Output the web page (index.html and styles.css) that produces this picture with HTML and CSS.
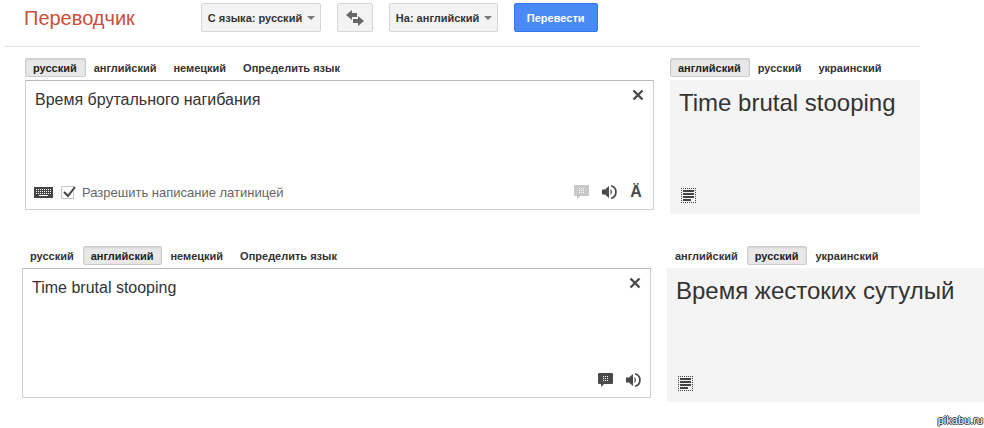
FILE: index.html
```html
<!DOCTYPE html>
<html lang="ru">
<head>
  <meta charset="UTF-8">
  <meta name="viewport" content="width=device-width, initial-scale=1.0">
  <title>Переводчик</title>
  <link rel="stylesheet" href="styles.css">
</head>
<body>
  <!-- Icons shared by both translations -->
  <svg class="sprite" aria-hidden="true">
    <symbol id="icon-close" viewBox="0 0 12 12">
      <path d="M1.500 1.500l9 9M10.500 1.500l-9 9" fill="none" stroke="#4a4a4a" stroke-width="2.4"/>
    </symbol>
    <symbol id="icon-comment" viewBox="0 0 16 16">
      <path d="M1 1h13q1 0 1 1v9q0 1-1 1H6l-3 3v-3H1q-1 0-1-1V2q0-1 1-1z" fill="currentColor"/>
      <path d="M5 4.500h5M5 6.500h5M5 8.500h5" stroke="#fff" stroke-dasharray="1 1" fill="none"/>
    </symbol>
    <symbol id="icon-sound" viewBox="0 0 16 16">
      <path d="M1 5.500h3L8 2v12l-4-3.500H1z" fill="#4a4a4a"/>
      <path d="M9.500 5q3 3 0 6z" fill="#4a4a4a"/>
      <path d="M10 1.700a6.500 6.500 0 0 1 0 12.600" fill="none" stroke="#4a4a4a" stroke-width="1.700"/>
    </symbol>
    <symbol id="icon-text" viewBox="0 0 15 15">
      <path d="M0 .5h15M0 14.500h15M.5 0v15M14.500 0v15" stroke="#444" stroke-dasharray="1 1" fill="none"/>
      <path d="M2 2h11v2H2zM2 5h11v2H2zM2 8h11v2H2zM2 11h8v2H2z" fill="#444"/>
    </symbol>
  </svg>

  <header>
    <h1>Переводчик</h1>
    <div class="controls">
      <div class="picker">
        <select aria-label="Язык оригинала">
          <option>С языка: русский</option>
        </select>
      </div>
      <button class="btn swap" type="button" aria-label="Поменять языки">
        <svg width="18" height="16" viewBox="0 0 18 16">
          <path d="M0 5l6-5v3h5v4H6v3zM18 11l-6 5v-3H7V9h5V6z" fill="#666"/>
        </svg>
      </button>
      <div class="picker">
        <select aria-label="Язык перевода">
          <option>На: английский</option>
        </select>
      </div>
      <button class="btn submit" type="button">Перевести</button>
    </div>
  </header>

  <main>
    <section class="translation first">
      <div class="source">
        <div class="tabs">
          <button class="active" type="button">русский</button>
          <button type="button">английский</button>
          <button type="button">немецкий</button>
          <button type="button">Определить язык</button>
        </div>
        <div class="box">
          <textarea aria-label="Исходный текст" spellcheck="false">Время брутального нагибания</textarea>
          <button class="icon clear" type="button" aria-label="Очистить"><svg width="12" height="12"><use href="#icon-close"/></svg></button>
          <div class="tools">
            <button class="icon keyboard" type="button" aria-label="Клавиатура">
              <svg width="19" height="11" viewBox="0 0 19 11">
                <rect width="19" height="11" fill="#444"/>
                <path d="M2 2.500h15M2 4.500h15M2 6.500h15" stroke="#fff" stroke-dasharray="1 1"/>
                <path d="M5 8.500h9" stroke="#fff"/>
              </svg>
            </button>
            <label class="latin">
              <span class="check">
                <input type="checkbox" checked>
                <svg width="15" height="14" viewBox="0 0 15 14"><path d="M3 6l4 4 7-9" fill="none" stroke="#444" stroke-width="2"/></svg>
              </span>
              Разрешить написание латиницей
            </label>
            <div class="actions">
              <button class="icon muted" type="button" aria-label="Фразы"><svg width="16" height="16"><use href="#icon-comment"/></svg></button>
              <button class="icon" type="button" aria-label="Прослушать"><svg width="16" height="16"><use href="#icon-sound"/></svg></button>
              <button class="icon letter" type="button" aria-label="Транслитерация">Ä</button>
            </div>
          </div>
        </div>
      </div>
      <div class="target">
        <div class="tabs">
          <button class="active" type="button">английский</button>
          <button type="button">русский</button>
          <button type="button">украинский</button>
        </div>
        <div class="result">
          <p>Time brutal stooping</p>
          <button class="icon" type="button" aria-label="Выделить текст"><svg width="15" height="15"><use href="#icon-text"/></svg></button>
        </div>
      </div>
    </section>

    <section class="translation second">
      <div class="source">
        <div class="tabs">
          <button type="button">русский</button>
          <button class="active" type="button">английский</button>
          <button type="button">немецкий</button>
          <button type="button">Определить язык</button>
        </div>
        <div class="box">
          <textarea aria-label="Исходный текст" spellcheck="false">Time brutal stooping</textarea>
          <button class="icon clear" type="button" aria-label="Очистить"><svg width="12" height="12"><use href="#icon-close"/></svg></button>
          <div class="tools">
            <div class="actions">
              <button class="icon" type="button" aria-label="Фразы"><svg width="16" height="16"><use href="#icon-comment"/></svg></button>
              <button class="icon" type="button" aria-label="Прослушать"><svg width="16" height="16"><use href="#icon-sound"/></svg></button>
            </div>
          </div>
        </div>
      </div>
      <div class="target">
        <div class="tabs">
          <button type="button">английский</button>
          <button class="active" type="button">русский</button>
          <button type="button">украинский</button>
        </div>
        <div class="result">
          <p>Время жестоких сутулый</p>
          <button class="icon" type="button" aria-label="Выделить текст"><svg width="15" height="15"><use href="#icon-text"/></svg></button>
        </div>
      </div>
    </section>
  </main>

  <footer>pikabu.ru</footer>
</body>
</html>
```

FILE: styles.css
```css
* {
  margin: 0;
  padding: 0;
  box-sizing: border-box;
}

body {
  background-color: #fff;
  color: #333;
  font-family: "Liberation Sans", Arial, sans-serif;
}

button,
select,
textarea {
  font-family: inherit;
  color: inherit;
}

svg {
  display: block;
}

.sprite {
  display: none;
}

/* Header */
header {
  display: flex;
  align-items: flex-start;
  gap: 66px;
  height: 47px;
  margin-left: 4px;
  margin-right: 64px;
  padding: 3px 0 0 20px;
  border-bottom: 1px solid #e5e5e5;
}

h1 {
  color: #c8503c;
  font-size: 20px;
  font-weight: normal;
  line-height: 30px;
}

.controls {
  display: flex;
  gap: 16px;
}

.btn,
.picker select {
  height: 29px;
  border: 1px solid #d6d6d6;
  border-radius: 2px;
  background-color: #f3f3f3;
  font-size: 11px;
  font-weight: bold;
}

.picker {
  position: relative;
}

.picker select {
  display: block;
  appearance: none;
  padding: 0 17px 0 6px;
}

.picker::after {
  content: "";
  position: absolute;
  top: 13px;
  right: 6px;
  border: 4px solid transparent;
  border-top-color: #777;
  border-bottom: 0;
  pointer-events: none;
}

.swap {
  padding: 0 8px;
}

.btn.submit {
  padding: 0 12px;
  border-color: #3079ed;
  background-color: #4a8af4;
  color: #fff;
}

/* Translations */
.translation {
  display: grid;
  column-gap: 16px;
}

.first {
  grid-template-columns: 1fr 250px;
  padding: 11px 64px 0 25px;
}

.second {
  grid-template-columns: 1fr 317px;
  padding: 32px 0 0 22px;
}

.tabs {
  display: flex;
  height: 22px;
  padding-bottom: 3px;
}

.tabs button {
  padding: 0 8px 0 7px;
  border: 1px solid transparent;
  border-radius: 2px;
  background: none;
  font-size: 11px;
  font-weight: bold;
  white-space: nowrap;
}

.tabs .active {
  border-color: #ccc;
  background-color: #e8e8e8;
  box-shadow: inset 0 1px 2px rgba(0, 0, 0, 0.1);
  color: #222;
}

.box {
  position: relative;
  display: flex;
  flex-direction: column;
  height: 130px;
  border: 1px solid #d0d0d0;
  border-top-color: #b8b8b8;
}

textarea {
  flex: 1;
  width: 100%;
  padding: 9px 32px 0 9px;
  border: 0;
  outline: 0;
  resize: none;
  background: none;
  font-size: 16px;
  line-height: 20px;
}

.icon {
  border: 0;
  background: none;
  color: #4a4a4a;
}

.clear {
  position: absolute;
  top: 8px;
  right: 9px;
}

.tools {
  display: flex;
  align-items: center;
  height: 34px;
  padding: 0 9px 0 8px;
}

.latin {
  display: flex;
  align-items: center;
  gap: 8px;
  margin-left: 8px;
  color: #666;
  font-size: 13px;
}

.check {
  position: relative;
}

.check input {
  display: block;
  appearance: none;
  width: 13px;
  height: 13px;
  border: 1px solid #c6c6c6;
}

.check svg {
  position: absolute;
  top: 0;
  left: 0;
}

.actions {
  display: flex;
  align-items: center;
  gap: 11px;
  margin-left: auto;
}

.muted {
  color: #c8c8c8;
}

.letter {
  width: 16px;
  font-size: 16px;
  font-weight: bold;
}

.result {
  display: flex;
  flex-direction: column;
  align-items: flex-start;
  justify-content: space-between;
  height: 134px;
  padding: 8px 9px 11px;
  background-color: #f4f4f4;
}

.result p {
  font-size: 24px;
  line-height: 30px;
  white-space: nowrap;
}

.result .icon {
  margin-left: 2px;
}

/* Site mark */
footer {
  padding: 12px 1px 0 0;
  color: #fff;
  font-size: 11px;
  line-height: 13px;
  text-align: right;
  text-shadow: 1px 0 #333, -1px 0 #333, 0 1px #333, 0 -1px #333;
}
```
